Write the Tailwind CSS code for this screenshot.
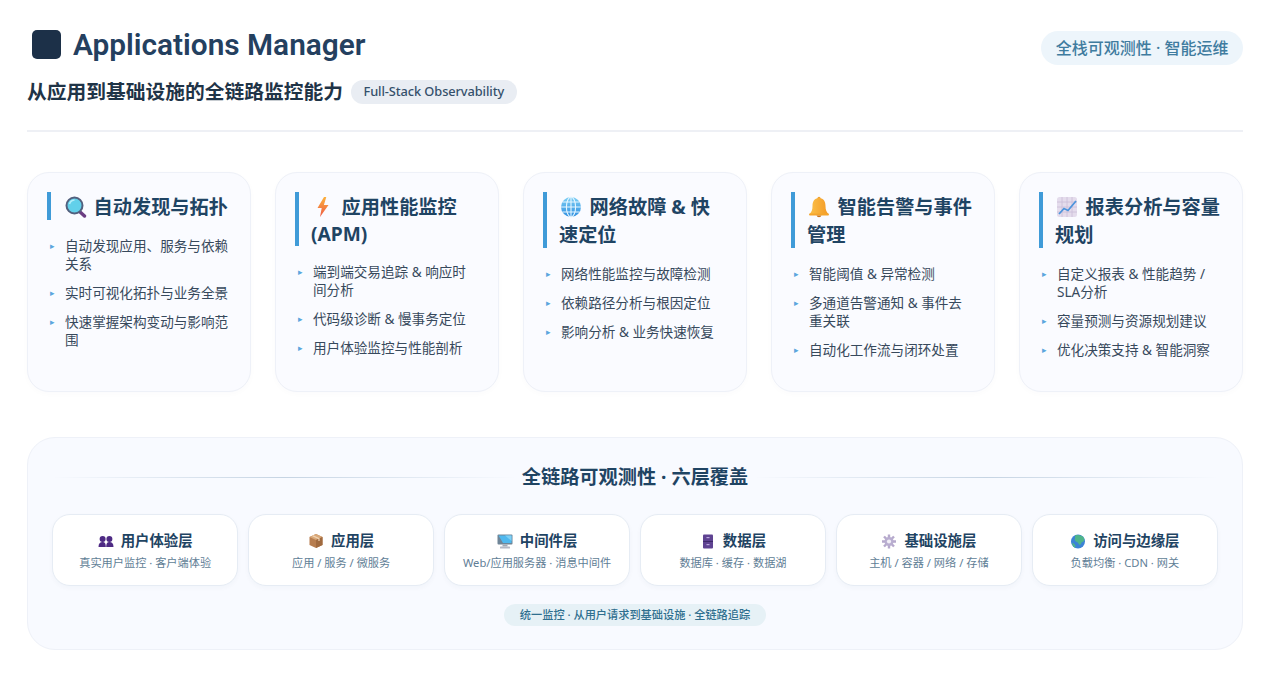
<!DOCTYPE html>
<html lang="zh-CN">
<head>
<meta charset="utf-8">
<title>Applications Manager</title>
<script src="https://cdn.jsdelivr.net/npm/@tailwindcss/browser@4"></script>
</head>
<body class="bg-white font-['Noto_Sans','Noto_Sans_CJK_SC',sans-serif] text-[#1f3a52]">
<div class="pl-[27px] pr-[28px] pt-[26px] h-[682px] overflow-hidden">

  <header class="border-b-2 border-[#eef0f5] h-[106px]">
    <div class="flex justify-between items-start">
      <div class="flex items-center h-[38px] pl-[5px] gap-[12px]">
        <svg class="w-[29px] h-[29px] mb-[1px]" viewBox="0 0 29 29"><rect width="29" height="29" rx="5" fill="#1c3048"/></svg>
        <h1 class="text-[29.8px] leading-[38px] font-semibold text-[#24405f] font-['Roboto','Noto_Sans',sans-serif]">Applications Manager</h1>
      </div>
      <div class="mt-[5px] h-[34px] px-[14.5px] rounded-full bg-[#edf5fb] text-[16px] font-medium text-[#3f7c9f] flex items-center">全栈可观测性 · 智能运维</div>
    </div>
    <div class="flex items-center gap-[8px] mt-[15px]">
      <p class="text-[19.75px] leading-[24px] font-semibold text-[#1f3447]">从应用到基础设施的全链路监控能力</p>
      <span class="h-[24px] px-[12.5px] rounded-full bg-[#e9edf3] text-[12.8px] tracking-[-0.09px] font-medium text-[#34506b] flex items-center whitespace-nowrap">Full-Stack Observability</span>
    </div>
  </header>

  <section class="grid grid-cols-5 gap-[24px] mt-[40px]">

    <article class="h-[220px] rounded-[22px] border border-[#eef1f8] bg-[#fafbff] shadow-[0_2px_6px_rgba(30,60,110,0.02)] pt-[19px] px-[19px]">
      <h2 class="h-[28px] border-l-4 border-[#3f9bd8] pl-[12px] pt-[1px] text-[19.2px] leading-[27px] font-bold text-[#1f4463]"><svg class="inline-block align-[-4px] w-[25px] h-[22px] mr-[5.6px]" viewBox="0 0 25 22"><path d="M16 15 L21.5 20" stroke="#6b3d83" stroke-width="3.4" stroke-linecap="round"/><circle cx="11.5" cy="9.5" r="8" fill="#62d0ea" stroke="#52607e" stroke-width="2"/><path d="M6.5 8 a5.5 5.5 0 0 1 5-4" stroke="#b5eefa" stroke-width="1.6" fill="none"/></svg>自动发现与拓扑</h2>
      <ul class="mt-[17px] flex flex-col gap-[10.4px] text-[13.6px] leading-[18.4px] text-[#37495c]">
        <li class="relative pl-[18px]"><span class="absolute left-[3px] top-[0px] text-[8.5px] text-[#5ba6de]">▸</span>自动发现应用、服务与依赖关系</li>
        <li class="relative pl-[18px]"><span class="absolute left-[3px] top-[0px] text-[8.5px] text-[#5ba6de]">▸</span>实时可视化拓扑与业务全景</li>
        <li class="relative pl-[18px]"><span class="absolute left-[3px] top-[0px] text-[8.5px] text-[#5ba6de]">▸</span>快速掌握架构变动与影响范围</li>
      </ul>
    </article>

    <article class="h-[220px] rounded-[22px] border border-[#eef1f8] bg-[#fafbff] shadow-[0_2px_6px_rgba(30,60,110,0.02)] pt-[19px] px-[19px]">
      <h2 class="h-[54px] border-l-4 border-[#3f9bd8] pl-[12px] pt-[1px] text-[19.2px] leading-[27px] font-bold text-[#1f4463]"><svg class="inline-block align-[-4px] w-[25px] h-[22px] mr-[5.6px]" viewBox="0 0 25 22"><defs><linearGradient id="bolt" x1="0" y1="0" x2="0" y2="1"><stop offset="0" stop-color="#fbb13c"/><stop offset="1" stop-color="#ee5a45"/></linearGradient></defs><path d="M13 1 L6.5 12 H10.7 L9 21 L17.5 9 H12.9 L15.3 1 Z" fill="url(#bolt)"/></svg>应用性能监控 (APM)</h2>
      <ul class="mt-[17px] flex flex-col gap-[10.4px] text-[13.6px] leading-[18.4px] text-[#37495c]">
        <li class="relative pl-[18px]"><span class="absolute left-[3px] top-[0px] text-[8.5px] text-[#5ba6de]">▸</span>端到端交易追踪 &amp; 响应时间分析</li>
        <li class="relative pl-[18px]"><span class="absolute left-[3px] top-[0px] text-[8.5px] text-[#5ba6de]">▸</span>代码级诊断 &amp; 慢事务定位</li>
        <li class="relative pl-[18px]"><span class="absolute left-[3px] top-[0px] text-[8.5px] text-[#5ba6de]">▸</span>用户体验监控与性能剖析</li>
      </ul>
    </article>

    <article class="h-[220px] rounded-[22px] border border-[#eef1f8] bg-[#fafbff] shadow-[0_2px_6px_rgba(30,60,110,0.02)] pt-[19px] px-[19px]">
      <h2 class="h-[56px] border-l-4 border-[#3f9bd8] pl-[12px] pt-[1px] text-[19.2px] leading-[28px] font-bold text-[#1f4463]"><svg class="inline-block align-[-4px] w-[25px] h-[22px] mr-[5.6px]" viewBox="0 0 25 22"><defs><linearGradient id="net" x1="0" y1="0" x2="0" y2="1"><stop offset="0" stop-color="#7fd0f5"/><stop offset="1" stop-color="#2f8fe0"/></linearGradient></defs><circle cx="12" cy="11" r="10" fill="url(#net)"/><g fill="none" stroke="#e6f6ff" stroke-width="1.1"><ellipse cx="12" cy="11" rx="4.6" ry="10"/><path d="M12 1 V21 M2 11 H22 M3.4 6 H20.6 M3.4 16 H20.6"/></g></svg>网络故障 &amp; 快速定位</h2>
      <ul class="mt-[17px] flex flex-col gap-[10.4px] text-[13.6px] leading-[18.4px] text-[#37495c]">
        <li class="relative pl-[18px]"><span class="absolute left-[3px] top-[0px] text-[8.5px] text-[#5ba6de]">▸</span>网络性能监控与故障检测</li>
        <li class="relative pl-[18px]"><span class="absolute left-[3px] top-[0px] text-[8.5px] text-[#5ba6de]">▸</span>依赖路径分析与根因定位</li>
        <li class="relative pl-[18px]"><span class="absolute left-[3px] top-[0px] text-[8.5px] text-[#5ba6de]">▸</span>影响分析 &amp; 业务快速恢复</li>
      </ul>
    </article>

    <article class="h-[220px] rounded-[22px] border border-[#eef1f8] bg-[#fafbff] shadow-[0_2px_6px_rgba(30,60,110,0.02)] pt-[19px] px-[19px]">
      <h2 class="h-[56px] border-l-4 border-[#3f9bd8] pl-[12px] pt-[1px] text-[19.2px] leading-[28px] font-bold text-[#1f4463]"><svg class="inline-block align-[-4px] w-[25px] h-[22px] mr-[5.6px]" viewBox="0 0 25 22"><defs><linearGradient id="bell" x1="0" y1="0" x2="1" y2="0"><stop offset="0" stop-color="#fbc04a"/><stop offset="1" stop-color="#f39a26"/></linearGradient></defs><circle cx="12" cy="2.4" r="1.6" fill="#f0a22e"/><path d="M12 2 C7 2 5.5 6 5.5 10 C5.5 14 4.5 15.8 2.5 18 H21.5 C19.5 15.8 18.5 14 18.5 10 C18.5 6 17 2 12 2 Z" fill="url(#bell)"/><rect x="2" y="17.6" width="20" height="2" rx="1" fill="#f5a52c"/><path d="M9.5 19.6 a2.6 2.2 0 0 0 5 0 Z" fill="#c9741c"/></svg>智能告警与事件管理</h2>
      <ul class="mt-[17px] flex flex-col gap-[10.4px] text-[13.6px] leading-[18.4px] text-[#37495c]">
        <li class="relative pl-[18px]"><span class="absolute left-[3px] top-[0px] text-[8.5px] text-[#5ba6de]">▸</span>智能阈值 &amp; 异常检测</li>
        <li class="relative pl-[18px]"><span class="absolute left-[3px] top-[0px] text-[8.5px] text-[#5ba6de]">▸</span>多通道告警通知 &amp; 事件去重关联</li>
        <li class="relative pl-[18px]"><span class="absolute left-[3px] top-[0px] text-[8.5px] text-[#5ba6de]">▸</span>自动化工作流与闭环处置</li>
      </ul>
    </article>

    <article class="h-[220px] rounded-[22px] border border-[#eef1f8] bg-[#fafbff] shadow-[0_2px_6px_rgba(30,60,110,0.02)] pt-[19px] px-[19px]">
      <h2 class="h-[56px] border-l-4 border-[#3f9bd8] pl-[12px] pt-[1px] text-[19.2px] leading-[28px] font-bold text-[#1f4463]"><svg class="inline-block align-[-4px] w-[25px] h-[22px] mr-[5.6px]" viewBox="0 0 25 22"><rect x="2" y="1" width="20" height="20" rx="2.5" fill="#e4dcec"/><path d="M2 6 H22 M2 11 H22 M2 16 H22 M7 1 V21 M12 1 V21 M17 1 V21" stroke="#c9bcd8" stroke-width="0.8"/><path d="M4 18 L9 12.5 L13 14.5 L21 5" fill="none" stroke="#4d94dc" stroke-width="1.8"/></svg>报表分析与容量规划</h2>
      <ul class="mt-[17px] flex flex-col gap-[10.4px] text-[13.6px] leading-[18.4px] text-[#37495c]">
        <li class="relative pl-[18px]"><span class="absolute left-[3px] top-[0px] text-[8.5px] text-[#5ba6de]">▸</span>自定义报表 &amp; 性能趋势 / SLA分析</li>
        <li class="relative pl-[18px]"><span class="absolute left-[3px] top-[0px] text-[8.5px] text-[#5ba6de]">▸</span>容量预测与资源规划建议</li>
        <li class="relative pl-[18px]"><span class="absolute left-[3px] top-[0px] text-[8.5px] text-[#5ba6de]">▸</span>优化决策支持 &amp; 智能洞察</li>
      </ul>
    </article>
  </section>

  <section class="mt-[45px] h-[213px] rounded-[28px] border border-[#eef1f8] bg-[#f8faff] px-[24px] pt-[25px]">
    <div class="flex items-center gap-[6px] h-[28px]">
      <div class="flex-1 h-px bg-gradient-to-r from-transparent via-[#c6d4e3] to-transparent"></div>
      <h3 class="text-[19.2px] leading-[28px] font-bold text-[#1f4463]">全链路可观测性 · 六层覆盖</h3>
      <div class="flex-1 h-px bg-gradient-to-r from-transparent via-[#c6d4e3] to-transparent"></div>
    </div>
    <div class="grid grid-cols-6 gap-[9.6px] mt-[23px]">

      <div class="h-[72px] rounded-[18px] border border-[#e6ecf4] bg-white shadow-[0_2px_5px_rgba(30,60,110,0.03)] flex flex-col items-center pt-[16px]">
        <div class="flex items-center h-[20px] text-[14.4px] font-bold text-[#1f4463]"><svg class="w-[16px] h-[14px] mr-[7px]" viewBox="0 0 16 14"><g fill="#4e2a84"><circle cx="4.6" cy="5" r="3"/><circle cx="11.4" cy="5" r="3"/><path d="M0.5 13 C0.5 9.5 2 8 4.6 8 C7 8 7.8 9.5 7.8 13 Z"/><path d="M8.2 13 C8.2 9.5 9 8 11.4 8 C14 8 15.5 9.5 15.5 13 Z"/></g></svg>用户体验层</div>
        <p class="mt-[3px] text-[11.2px] leading-[18px] text-[#5f7e96]">真实用户监控 · 客户端体验</p>
      </div>

      <div class="h-[72px] rounded-[18px] border border-[#e6ecf4] bg-white shadow-[0_2px_5px_rgba(30,60,110,0.03)] flex flex-col items-center pt-[16px]">
        <div class="flex items-center h-[20px] text-[14.4px] font-bold text-[#1f4463]"><svg class="w-[16px] h-[16px] mr-[7px]" viewBox="0 0 16 16"><path d="M8 1 L14.5 4 V12 L8 15 L1.5 12 V4 Z" fill="#b77d4f"/><path d="M8 1 L14.5 4 L8 7 L1.5 4 Z" fill="#d9a878"/><path d="M8 7 V15 L14.5 12 V4 Z" fill="#a06a3f"/><path d="M4.5 2.6 L11 5.6 V8" fill="none" stroke="#efd3b3" stroke-width="1.2"/></svg>应用层</div>
        <p class="mt-[3px] text-[11.2px] leading-[18px] text-[#5f7e96]">应用 / 服务 / 微服务</p>
      </div>

      <div class="h-[72px] rounded-[18px] border border-[#e6ecf4] bg-white shadow-[0_2px_5px_rgba(30,60,110,0.03)] flex flex-col items-center pt-[16px]">
        <div class="flex items-center h-[20px] text-[14.4px] font-bold text-[#1f4463]"><svg class="w-[16px] h-[15px] mr-[7px]" viewBox="0 0 16 15"><rect x="0.5" y="0.5" width="15" height="10" rx="1" fill="#6f8597"/><path d="M1.5 1.5 H14.5 V9 H6 Z" fill="#4fb8ee"/><path d="M1.5 1.5 H8 L14.5 7 V1.5 Z" fill="#7ed0f5"/><rect x="5.5" y="10.5" width="5" height="2" fill="#a3a9b5"/><rect x="3" y="12.5" width="10" height="2" rx="0.5" fill="#b4b8c4"/></svg>中间件层</div>
        <p class="mt-[3px] text-[11.2px] leading-[18px] text-[#5f7e96]">Web/应用服务器 · 消息中间件</p>
      </div>

      <div class="h-[72px] rounded-[18px] border border-[#e6ecf4] bg-white shadow-[0_2px_5px_rgba(30,60,110,0.03)] flex flex-col items-center pt-[16px]">
        <div class="flex items-center h-[20px] text-[14.4px] font-bold text-[#1f4463]"><svg class="w-[16px] h-[15px] mr-[7px]" viewBox="0 0 16 15"><rect x="3" y="0.5" width="10" height="14" rx="1" fill="#5f4392"/><rect x="3" y="7" width="10" height="1" fill="#3f2a6a"/><rect x="6.5" y="3" width="3" height="1.2" fill="#b9a6dd"/><rect x="6.5" y="10" width="3" height="1.2" fill="#b9a6dd"/></svg>数据层</div>
        <p class="mt-[3px] text-[11.2px] leading-[18px] text-[#5f7e96]">数据库 · 缓存 · 数据湖</p>
      </div>

      <div class="h-[72px] rounded-[18px] border border-[#e6ecf4] bg-white shadow-[0_2px_5px_rgba(30,60,110,0.03)] flex flex-col items-center pt-[16px]">
        <div class="flex items-center h-[20px] text-[14.4px] font-bold text-[#1f4463]"><svg class="w-[16px] h-[15px] mr-[7px]" viewBox="0 0 16 15"><g stroke="#b6a9cc" stroke-width="2.4"><path d="M8 0.5 V14.5 M1 7.5 H15 M3 2.5 L13 12.5 M13 2.5 L3 12.5"/></g><circle cx="8" cy="7.5" r="4.6" fill="#b9aed0"/><circle cx="8" cy="7.5" r="2.1" fill="#f1eef6"/></svg>基础设施层</div>
        <p class="mt-[3px] text-[11.2px] leading-[18px] text-[#5f7e96]">主机 / 容器 / 网络 / 存储</p>
      </div>

      <div class="h-[72px] rounded-[18px] border border-[#e6ecf4] bg-white shadow-[0_2px_5px_rgba(30,60,110,0.03)] flex flex-col items-center pt-[16px]">
        <div class="flex items-center h-[20px] text-[14.4px] font-bold text-[#1f4463]"><svg class="w-[16px] h-[15px] mr-[7px]" viewBox="0 0 16 15"><circle cx="8" cy="7.5" r="7" fill="#3c83d6"/><path d="M5 1.5 C8 0.5 12 1 14 4 C14.6 6 14 7.5 12.5 8 C11 8 11.5 10 10 11 C8.6 11 8.6 8.6 7 8 C5.5 7.6 4 6 5 4 Z" fill="#4fb58a"/><path d="M2 9 C3.5 9 5 10 5.5 12 L5 14 C3.5 13 2.4 11 2 9 Z" fill="#4fb58a"/></svg>访问与边缘层</div>
        <p class="mt-[3px] text-[11.2px] leading-[18px] text-[#5f7e96]">负载均衡 · CDN · 网关</p>
      </div>
    </div>
    <div class="flex justify-center mt-[18px]">
      <span class="h-[22px] px-[16px] rounded-full bg-[#e6f1f6] text-[11.2px] font-medium text-[#2f6f8f] flex items-center">统一监控 · 从用户请求到基础设施 · 全链路追踪</span>
    </div>
  </section>
</div>
</body>
</html>
